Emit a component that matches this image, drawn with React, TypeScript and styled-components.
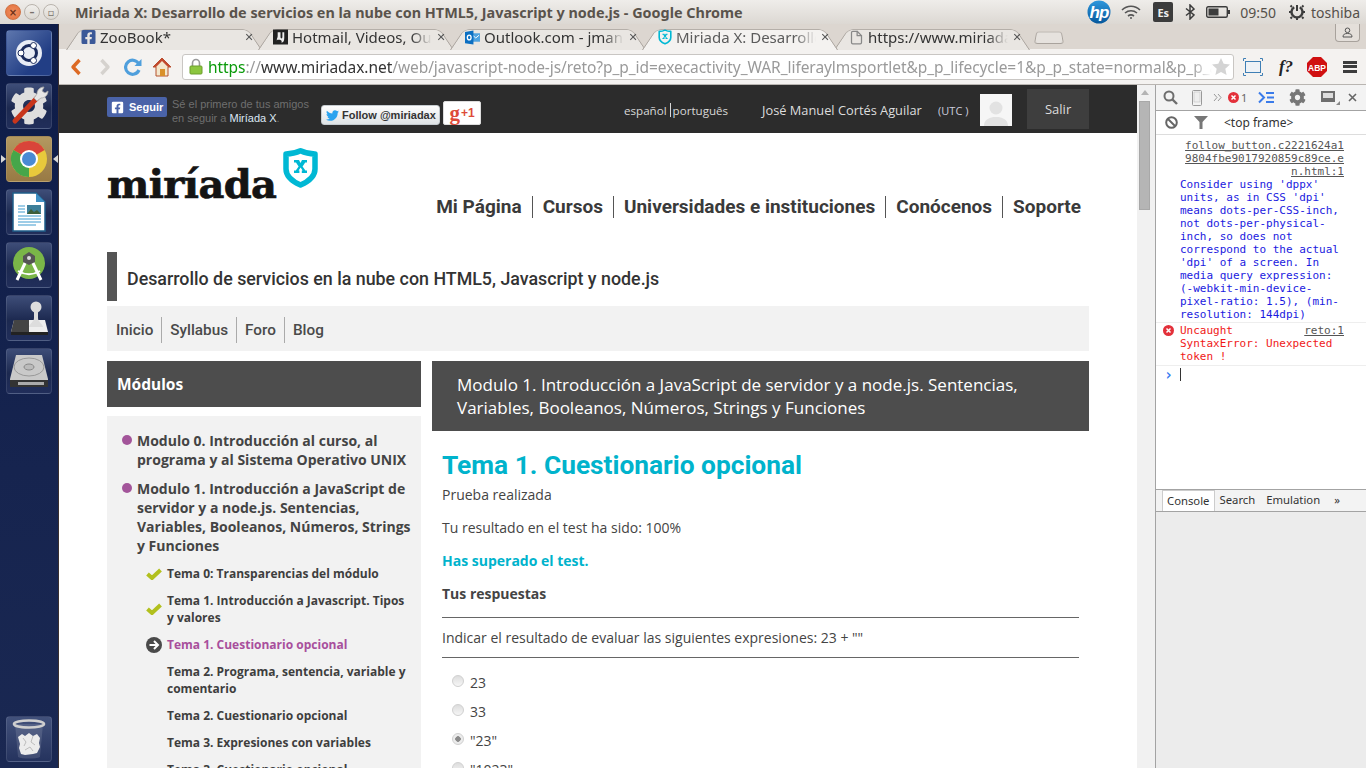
import React from "react";
import styled, { createGlobalStyle } from "styled-components";
import { FaFacebookSquare, FaTwitter, FaCog } from "react-icons/fa";
import { FiFile } from "react-icons/fi";

const Global = createGlobalStyle`
  html, body { margin: 0; padding: 0; width: 1366px; height: 768px; overflow: hidden; background: #fff; }
  * { box-sizing: border-box; }
`;

const Desktop = styled.div`
  width: 1366px; height: 768px; overflow: hidden; display: flex; flex-direction: column;
  font-family: "Open Sans", sans-serif; color: #444;
`;

/* ---------- top panel ---------- */
const TopBar = styled.header`
  height: 24px; flex: none; display: flex; align-items: center; padding: 0 6px 0 4px;
  background: linear-gradient(#efedea, #dcd8d3);
`;
const WinButtons = styled.div`display: flex; gap: 3px; width: 71px; flex: none; padding-left: 1px;`;
const WinButton = styled.span<{ $close?: boolean }>`
  width: 16px; height: 16px; border-radius: 50%; display: flex; align-items: center; justify-content: center;
  font: 700 10px "DejaVu Sans", sans-serif; color: ${p => (p.$close ? "#6e3218" : "#77706a")};
  border: 1px solid ${p => (p.$close ? "#d07344" : "#b9b3ac")};
  background: ${p => (p.$close ? "radial-gradient(#f0905f, #e36f3e)" : "linear-gradient(#f1efec, #dcd8d2)")};
`;
const WinTitle = styled.div`
  flex: 1; font: 700 14.4px "Noto Sans", sans-serif; color: #5a534c; white-space: nowrap;
`;
const Tray = styled.div`
  display: flex; align-items: center; flex: none; height: 24px; color: #4c4c4c;
  font: 400 14px "Noto Sans", sans-serif;
`;
const EsBadge = styled.span`
  width: 20px; height: 20px; background: #3c3c3c; color: #eee; border-radius: 2px; display: flex; align-items: center; justify-content: center;
  font: 700 11px "Noto Sans", sans-serif; margin: 0 12px 0 12px;
`;
const TrayText = styled.span<{ $l?: number; $r?: number }>`
  margin-left: ${p => p.$l ?? 0}px; margin-right: ${p => p.$r ?? 0}px;
  color: #55504a; white-space: nowrap;
`;
const TraySvg = styled.svg<{ $l?: number }>`margin-left: ${p => p.$l ?? 0}px; display: block; flex: none;`;

/* ---------- launcher ---------- */
const Body = styled.div`flex: 1; min-height: 0; display: flex;`;
const Launcher = styled.nav`
  width: 59px; flex: none; display: flex; flex-direction: column; gap: 7px; padding: 6px 0 6px 6px;
  background: linear-gradient(#0e1c48, #16244f 60%, #1a2852);
  border-right: 1px solid #3a3030;
  position: relative;
`;
const Tile = styled.div<{ $bg?: string }>`
  width: 46px; height: 46px; flex: none; border-radius: 4px; position: relative;
  background: ${p => p.$bg ?? "linear-gradient(#3e4d78, #1c2950 55%, #212e5a)"};
  border: 1px solid rgba(255,255,255,.1);
  display: flex; align-items: center; justify-content: center;
`;
const Pip = styled.span<{ $right?: boolean }>`
  position: absolute; top: 18px; width: 0; height: 0; border-top: 4px solid transparent; border-bottom: 4px solid transparent;
  ${p => p.$right ? "right: -7px; border-right: 5px solid #d8d8d8;" : "left: -6px; border-left: 5px solid #d8d8d8;"}
`;
const Spacer = styled.div`flex: 1;`;

/* ---------- browser chrome ---------- */
const Browser = styled.div`flex: 1; min-width: 0; display: flex; flex-direction: column;`;
const TabStrip = styled.div`
  height: 25px; flex: none; display: flex; align-items: flex-end; padding-left: 9px; position: relative;
  background: #dcd6d0;
`;
const Tab = styled.div<{ $active?: boolean }>`
  width: 192px; height: 24px; flex: none; position: relative; display: flex; align-items: center;
  padding: 0 4px 0 13px; font: 400 15px "Noto Sans", sans-serif; color: ${p => (p.$active ? "#5b5b5b" : "#333")};
  z-index: ${p => (p.$active ? 2 : 1)};
  &::before {
    content: ""; position: absolute; inset: 0 -2px -1px -2px; z-index: -1; transform-origin: bottom;
    transform: perspective(36px) rotateX(14deg);
    border: 1px solid #a8a29c; border-bottom: none; border-radius: 6px 6px 0 0;
    background: ${p => (p.$active ? "#f4f2f0" : "#e9e6e2")};
  }
`;
const TabFav = styled.span`width: 15px; flex: none; display: flex; align-items: center; justify-content: center;`;
const TabLabel = styled.span`
  flex: 1; min-width: 0; margin-left: 4px; white-space: nowrap; overflow: hidden;
  -webkit-mask-image: linear-gradient(90deg, #000 85%, transparent 100%);
  mask-image: linear-gradient(90deg, #000 85%, transparent 100%);
`;
const TabClose = styled.span`font: 700 11px "DejaVu Sans", sans-serif; color: #555; width: 14px; text-align: center; margin-left: 2px; flex: none;`;
const NewTab = styled.div`
  width: 30px; height: 15px; margin: 0 0 5px 6px; position: relative; flex: none;
  &::before {
    content: ""; position: absolute; inset: 0; transform-origin: bottom; transform: perspective(20px) rotateX(14deg);
    border: 1px solid #a8a29c; border-radius: 3px; background: #e6e2de;
  }
`;
const ProfileBtn = styled.div`
  position: absolute; right: 6px; top: 0; width: 25px; height: 18px; border: 1px solid #a8a29c; border-top: none;
  border-radius: 0 0 4px 4px; display: flex; align-items: center; justify-content: center; background: #e4dfda;
`;
const Toolbar = styled.div`
  height: 36px; flex: none; display: flex; align-items: center; background: #f4f2f0; border-bottom: 1px solid #b9b5b1;
  padding: 0 0 0 6px;
`;
const NavIcon = styled.span<{ $w: number }>`width: ${p => p.$w}px; flex: none; display: flex; justify-content: center; align-items: center;`;
const HomeIcon = styled.span`width: 40px; flex: none; display: flex; padding-left: 10px; align-items: center;`;
const Omnibox = styled.div`
  width: 1052px; height: 26px; flex: none; background: #fff; border: 1px solid #c9c6c3; border-radius: 3px;
  display: flex; align-items: center; padding: 0 3px 0 6px;
`;
const Url = styled.div`
  flex: 1; min-width: 0; overflow: hidden; white-space: nowrap; margin-left: 5px;
  font: 400 15.5px "Noto Sans", sans-serif; color: #9a9a9a; letter-spacing: -0.06px;
  -webkit-mask-image: linear-gradient(90deg, #000 98%, transparent 100%);
  mask-image: linear-gradient(90deg, #000 98%, transparent 100%);
`;
const UrlGreen = styled.span`color: #0a9a0a;`;
const UrlDark = styled.span`color: #333;`;
const FQ = styled.span`font: italic 700 17px "Liberation Serif", serif; color: #222;`;
const Burger = styled.span`
  width: 14px; height: 12px; border-top: 3px solid #3c3c3c; border-bottom: 3px solid #3c3c3c; position: relative; display: block;
  &::after { content: ""; position: absolute; left: 0; right: 0; top: 1.5px; height: 3px; background: #3c3c3c; }
`;

/* ---------- viewport ---------- */
const Viewport = styled.div`flex: 1; min-height: 0; display: flex;`;
const Page = styled.main`width: 1078px; flex: none; background: #fff; overflow: hidden;`;
const DarkBar = styled.div`
  height: 48px; background: #2c2c2c; padding: 0 48px; display: flex; align-items: flex-start;
`;
const FbBtn = styled.a`
  width: 60px; height: 20px; margin-top: 12px; flex: none; background: #4a63a8; border-radius: 2px; color: #fff;
  display: flex; align-items: center; gap: 5px; padding-left: 4px; font: 700 11px "Liberation Sans", sans-serif;
`;
const FbNote = styled.div`
  width: 149px; margin: 12px 0 0 5px; flex: none; font: 400 11px/14px "Liberation Sans", sans-serif; color: #6f6f6f;
`;
const FbName = styled.span`color: #dce8f5;`;
const TwBtn = styled.a`
  width: 119px; height: 20px; margin-top: 20px; flex: none; background: linear-gradient(#fdfdfd, #dfe3e6); border: 1px solid #c6ccd0; border-radius: 3px;
  display: flex; align-items: center; gap: 3px; padding-left: 4px; font: 700 11px "Liberation Sans", sans-serif; color: #333; white-space: nowrap;
`;
const GBtn = styled.a`
  width: 38px; height: 24px; margin: 16px 0 0 3px; flex: none; background: #fff; border: 1px solid #ddd; border-radius: 2px; color: #dd4b39;
  display: flex; align-items: center; justify-content: center; gap: 1px; font: 700 21px/20px "Liberation Serif", serif; white-space: nowrap;
`;
const GPlus = styled.span`font: 700 12px "Liberation Sans", sans-serif;`;
const Langs = styled.div`
  margin: 18px 0 0 143px; flex: none; display: flex; align-items: center; font: 400 11.6px "Open Sans", sans-serif; color: #d8d8d8; height: 14px;
`;
const LangSep = styled.span`width: 1px; height: 14px; background: #d8d8d8; margin: 0 2px 0 3px;`;
const UserName = styled.div`margin: 15px 0 0 34px; flex: none; font: 400 12.8px/20px "Open Sans", sans-serif; color: #ddd; white-space: nowrap; width: 160px;`;
const Utc = styled.div`margin: 18px 0 0 16px; flex: none; font: 400 11px/16px "Open Sans", sans-serif; color: #ccd; white-space: nowrap; width: 32px;`;
const Avatar = styled.div`width: 32px; height: 32px; margin: 9px 0 0 10px; flex: none; background: #f6f6f6; display: flex; align-items: flex-end; justify-content: center; overflow: hidden;`;
const Salir = styled.a`
  width: 62px; height: 40px; margin: 4px 0 0 15px; flex: none; background: #3e3e3e; color: #ddd; display: flex; align-items: center; justify-content: center;
  font: 400 13px "Open Sans", sans-serif;
`;
const Content = styled.div`padding: 0 48px;`;
const SiteHeader = styled.div`height: 119px; display: flex; justify-content: space-between; align-items: flex-start;`;
const Logo = styled.div`display: flex; align-items: flex-start; gap: 7px; padding-top: 15px; flex: none;`;
const LogoWord = styled.div`
  font: 700 40px/1 "DejaVu Serif", serif; color: #141414; letter-spacing: -0.6px; padding-top: 16px;
  -webkit-text-stroke: 0.7px #141414;
`;
const MainNav = styled.nav`display: flex; align-items: center; margin: 63px 8px 0 0; height: 22px;`;
const NavItem = styled.a<{ $sep?: boolean }>`
  font: 700 19px "Roboto", sans-serif; color: #3a3a3a; white-space: nowrap; padding: 0 10px; line-height: 22px;
  ${p => p.$sep ? "border-left: 1px solid #555;" : ""}
  &:last-child { padding-right: 0; }
`;
const CourseTitle = styled.div`
  height: 49px; display: flex; align-items: center; border-left: 10px solid #555; padding: 3px 0 0 10px;
  font: 500 17.83px "Roboto", sans-serif; color: #333; white-space: nowrap;
`;
const CourseTabs = styled.div`
  height: 45px; margin-top: 5px; background: #f2f2f2; display: flex; align-items: center; padding: 3px 0 0 1px;
`;
const CourseTab = styled.a<{ $sep?: boolean }>`
  font: 500 15.3px/26px "Roboto", sans-serif; color: #4a4a4a; padding: 0 8px;
  ${p => p.$sep ? "border-left: 1px solid #aaa;" : ""}
`;
const Columns = styled.div`display: flex; gap: 11px; margin-top: 10px;`;
const Side = styled.aside`width: 314px; flex: none;`;
const SideHead = styled.div`
  height: 46px; background: #4d4d4d; color: #fff; display: flex; align-items: center; padding-left: 10px;
  font: 700 15.5px "Noto Sans", sans-serif;
`;
const SidePanel = styled.div`margin-top: 9px; background: #f2f2f2; padding: 15px 10px 10px 15px;`;
const Mod = styled.div`
  position: relative; padding-left: 15px; font: 700 14px/19px "Open Sans", sans-serif; color: #444; margin-bottom: 10px;
  &::before { content: ""; position: absolute; left: 0; top: 4px; width: 10px; height: 10px; border-radius: 50%; background: #a3559a; }
`;
const Sub = styled.div<{ $current?: boolean }>`
  position: relative; margin: 0 0 10px 45px; font: 700 12px/17px "Open Sans", sans-serif;
  color: ${p => (p.$current ? "#a84f9c" : "#3e3e3e")};
`;
const SubIcon = styled.span`position: absolute; left: -21px; top: 50%; transform: translateY(-50%); display: flex;`;
const Main = styled.section`width: 657px; flex: none;`;
const MainHead = styled.div`
  height: 70px; background: #4d4d4d; color: #fff; padding: 12px 25px 0; font: 400 17px/23px "Open Sans", sans-serif;
`;
const MainBody = styled.div`padding: 18px 10px 0;`;
const H1 = styled.h1`margin: 0 0 4px; font: 700 26.3px/32px "Roboto", sans-serif; color: #00b3cc;`;
const P = styled.p<{ $accent?: boolean; $bold?: boolean }>`
  margin: 0 0 ${p => (p.$bold ? 15 : 14)}px; font: ${p => (p.$bold || p.$accent ? 700 : 400)} 14px/19px "Open Sans", sans-serif;
  color: ${p => (p.$accent ? "#00b3cc" : "#444")};
`;
const Question = styled.div`
  margin-top: -1px; border-top: 1px solid #666; border-bottom: 1px solid #666; height: 41px; display: flex; align-items: center;
  font: 400 14px "Open Sans", sans-serif; color: #444;
`;
const Options = styled.div`padding: 10px 0 0 10px; display: flex; flex-direction: column;`;
const Option = styled.label`height: 29px; display: flex; align-items: center; gap: 6px; font: 400 14px "Open Sans", sans-serif; color: #444;`;
const Radio = styled.span<{ $on?: boolean }>`
  width: 12px; height: 12px; border-radius: 50%; flex: none; border: 1px solid #d0d0d0; margin-top: -3px;
  background: ${p => (p.$on ? "radial-gradient(circle, #8a8a8a 0 2.5px, #ececec 3px)" : "linear-gradient(#ddd, #f6f6f6)")};
`;

/* scrollbar */
const Scroll = styled.div`
  width: 18px; flex: none; background: #f1f1f1; padding: 5px 5px 0 2px; display: flex; flex-direction: column; align-items: stretch;
`;
const ScrollUp = styled.span`width: 0; height: 0; align-self: center; border-left: 4px solid transparent; border-right: 4px solid transparent; border-bottom: 5px solid #b4b4b4;`;
const Thumb = styled.div`height: 109px; margin-top: 6px; background: #b5b5b5; border: 1px solid #a8a8a8;`;

/* devtools */
const Dev = styled.aside`
  width: 211px; flex: none; border-left: 1px solid #a3a3a3; background: #fff; display: flex; flex-direction: column;
`;
const DevBar = styled.div`
  height: 26px; flex: none; background: #f3f3f3; border-bottom: 1px solid #a3a3a3; display: flex; align-items: center; padding-left: 7px;
`;
const DevIcon = styled.span<{ $l?: number }>`margin-left: ${p => p.$l ?? 0}px; display: flex; align-items: center; flex: none;`;
const ErrCount = styled.span`font: 400 11px "Noto Sans", sans-serif; color: #666; margin-left: 2px;`;
const DevBar2 = styled.div`
  height: 24px; flex: none; border-bottom: 1px solid #ddd; display: flex; align-items: center; padding-left: 9px; background: #fff;
`;
const FrameName = styled.span`margin-left: 16px; font: 400 12px "Noto Sans", sans-serif; color: #333;`;
const ConsoleArea = styled.div`height: 355px; flex: none; overflow: hidden; font: 400 11px/13px "DejaVu Sans Mono", monospace;`;
const Source = styled.div`padding: 4px 22px 0 24px; text-align: right; color: #555; text-decoration: underline; word-break: break-all;`;
const LogMsg = styled.div`padding: 0 22px 1px 24px; color: #1a1ae0; border-bottom: 1px solid #eee;`;
const ErrMsg = styled.div`
  position: relative; padding: 1px 22px 2px 24px; color: #f01818; border-bottom: 1px solid #eee;
`;
const ErrFile = styled.span`float: right; color: #555; text-decoration: underline;`;
const ErrDot = styled.span`position: absolute; left: 7px; top: 2px; display: flex;`;
const Prompt = styled.div`position: relative; padding: 2px 0 0 24px; height: 18px;`;
const PromptMark = styled.span`position: absolute; left: 8px; top: 0; color: #367cf1; font: 700 15px "DejaVu Sans Mono", monospace;`;
const Caret = styled.span`display: block; width: 1px; height: 13px; background: #333;`;
const DrawerTabs = styled.div`
  height: 23px; flex: none; border-top: 1px solid #a3a3a3; border-bottom: 1px solid #a3a3a3; background: #f3f3f3; display: flex; align-items: stretch; padding-left: 6px;
  font: 400 11.3px "Noto Sans", sans-serif; color: #333; margin-top: -1px;
`;
const DrawerTab = styled.span<{ $on?: boolean; $r?: number }>`
  display: flex; align-items: center; padding: 0 5px 2px; margin-right: ${p => p.$r ?? 0}px;
  ${p => p.$on ? "background: #fff; border: 1px solid #ccc; border-bottom: none; padding: 0 4px 2px;" : ""}
`;
const DrawerFill = styled.div`flex: 1; background: #ececec;`;

const Shield = ({ size = 16, w = 5.5 }: { size?: number; w?: number }) => (
  <svg width={size * 0.875} height={size} viewBox="0 0 35 40">
    <path d="M17.5 2.8C22 5 27 6 32 6V21C32 28 25.5 33.5 17.5 37C9.5 33.5 3 28 3 21V6C8 6 13 5 17.5 2.8Z" fill="none" stroke="#00b8d4" strokeWidth={w} strokeLinejoin="round" />
    <path d="M11 12h5l1.5 3 1.5-3h5v2.4h-1.8l-2.6 4 2.8 4.2H24V25h-5.2v-2.4h.8l-2-3-2 3h.8V25H11v-2.4h1.8l2.8-4.2-2.6-4H11z" fill="#00b8d4" />
  </svg>
);

const tabsData = [
  { label: "ZooBook*", icon: <FaFacebookSquare size={16} color="#3b5998" /> },
  {
    label: "Hotmail, Videos, Outlook",
    icon: (
      <svg width="16" height="16" viewBox="0 0 16 16"><rect width="16" height="16" fill="#222" /><path d="M5 3h3v5c0 2 2 2 2 0V3h2v6c0 3-1 5-3 5 1-2-1-3-2-3-2 0-3 0-3 1 0-3 1-3 1-5z" fill="#eee" /></svg>
    ),
  },
  {
    label: "Outlook.com - jmanuel",
    icon: (
      <svg width="16" height="15" viewBox="0 0 16 15"><rect x="7" y="3" width="9" height="9" fill="#4fa3e0" /><path d="M8 5l3.5 3L15 5" fill="none" stroke="#fff" /><path d="M0 1.5 9 0v15L0 13.5z" fill="#0b6fc2" /><ellipse cx="4.5" cy="7.5" rx="2" ry="2.6" fill="none" stroke="#fff" strokeWidth="1.4" /></svg>
    ),
  },
  { label: "Miriada X: Desarrollo de", icon: <Shield size={16} w={4} />, active: true },
  { label: "https://www.miriadax.net", icon: <FiFile size={15} color="#888" /> },
];

export default function App() {
  return (
    <Desktop>
      <Global />
      <TopBar>
        <WinButtons>
          <WinButton $close>×</WinButton>
          <WinButton>–</WinButton>
          <WinButton>▫</WinButton>
        </WinButtons>
        <WinTitle>Miriada X: Desarrollo de servicios en la nube con HTML5, Javascript y node.js - Google Chrome</WinTitle>
        <Tray>
          <TraySvg width="24" height="24" viewBox="0 0 24 24">
            <defs><linearGradient id="hpg" x1="0" y1="0" x2="0" y2="1"><stop offset="0" stopColor="#2f97dc" /><stop offset="1" stopColor="#06589c" /></linearGradient></defs>
            <circle cx="12" cy="12" r="11.5" fill="url(#hpg)" />
            <text x="12" y="17.5" textAnchor="middle" fontFamily="Liberation Sans" fontStyle="italic" fontWeight="700" fontSize="17" fill="#fff" letterSpacing="-1">hp</text>
          </TraySvg>
          <TraySvg $l={10} width="20" height="14" viewBox="0 0 20 14"><path d="M1 5c5-5 13-5 18 0M4 8c3.5-3 8.5-3 12 0M7 11c2-1.5 4-1.5 6 0" fill="none" stroke="#555" strokeWidth="1.6" /><circle cx="10" cy="13" r="1" fill="#555" /></TraySvg>
          <EsBadge>Es</EsBadge>
          <TraySvg width="10" height="16" viewBox="0 0 10 16"><path d="M1 4.5 9 11l-4 4V1l4 4-8 6.5" fill="none" stroke="#3c3c3c" strokeWidth="1.5" /></TraySvg>
          <TraySvg $l={11} width="24" height="12" viewBox="0 0 24 12"><rect x=".7" y=".7" width="20.6" height="10.6" rx="1.5" fill="none" stroke="#3c3c3c" strokeWidth="1.4" /><rect x="2.5" y="2.5" width="10" height="7" fill="#3c3c3c" /><rect x="22" y="4" width="2" height="4" fill="#3c3c3c" /></TraySvg>
          <TrayText $l={10}>09:50</TrayText>
          <TraySvg $l={13} width="16" height="16" viewBox="0 0 16 16"><path d="M5.2 3.2A5.5 5.5 0 1 0 10.8 3.2" fill="none" stroke="#3c3c3c" strokeWidth="2.4" /><path d="M8 1v6" stroke="#3c3c3c" strokeWidth="2" /><path d="M8 14v2M2 8H0M16 8h-2M3 3 1.5 1.5M13 3l1.5-1.500M3 13l-1.500 1.500M13 13l1.500 1.500" stroke="#3c3c3c" strokeWidth="2" /></TraySvg>
          <TrayText $l={6}>toshiba</TrayText>
        </Tray>
      </TopBar>
      <Body>
        <Launcher>
          <Tile $bg="linear-gradient(135deg, #5d76ad, #223e85 70%)">
            <svg width="28" height="28" viewBox="0 0 28 28"><circle cx="14" cy="14" r="13" fill="#e8ecf5" /><circle cx="14" cy="14" r="7.5" fill="none" stroke="#1a2a5c" strokeWidth="3" /><circle cx="6" cy="14" r="3" fill="#fff" stroke="#1a2a5c" /><circle cx="18.5" cy="6.5" r="3" fill="#fff" stroke="#1a2a5c" /><circle cx="18.5" cy="21.5" r="3" fill="#fff" stroke="#1a2a5c" /></svg>
          </Tile>
          <Tile>
            <svg width="42" height="42" viewBox="0 0 42 42">
              <FaCog x="2" y="2" size={38} color="#dedede" />
              <path d="M7 36 29 13" stroke="#c8361c" strokeWidth="5" strokeLinecap="round" />
              <path d="M36 2c-4 0-7 3-7 7l-3 4 3 3 4-3c4 0 7-3 7-7l-3 2-3-2z" fill="#e6e6e6" stroke="#aaa" strokeWidth=".8" />
            </svg>
          </Tile>
          <Tile $bg="linear-gradient(#b39860, #987a44)">
            <Pip />
            <Pip $right />
            <svg width="40" height="40" viewBox="0 0 40 40"><circle cx="20" cy="20" r="18" fill="#e8c93c" /><path d="M20 20 4.4 11A18 18 0 0 1 35.6 11z" fill="#d9453a" /><path d="M20 20 4.4 11A18 18 0 0 0 20 38z" fill="#46a64a" /><circle cx="20" cy="20" r="9" fill="#fff" /><circle cx="20" cy="20" r="7" fill="#4a8ad4" /></svg>
          </Tile>
          <Tile>
            <svg width="34" height="40" viewBox="0 0 34 40"><path d="M1 1h23l9 9v29H1z" fill="#fff" stroke="#1f5f8a" strokeWidth="1.5" /><path d="M24 1l9 9h-9z" fill="#3f8fc4" /><rect x="15" y="13" width="14" height="9" fill="#3d7f9a" /><path d="M15 22l4-5 3 3 3-2 4 4z" fill="#3d5f3a" /><path d="M6 14h7M6 17h7M6 20h7M6 24h23M6 27h23M6 30h23M6 33h18" stroke="#7fbde0" strokeWidth="1.6" /></svg>
          </Tile>
          <Tile>
            <svg width="40" height="40" viewBox="0 0 40 40"><circle cx="20" cy="18" r="16" fill="#7ab648" /><path d="M8 35 18 14M32 35 22 14" stroke="#fff" strokeWidth="3" /><path d="M9 26c7 4 15 4 22 0" fill="none" stroke="#fff" strokeWidth="2" /><path d="M20 7l6 4v6l-6 3-6-3v-6z" fill="#555" /><circle cx="20" cy="13" r="2" fill="#ddd" /></svg>
          </Tile>
          <Tile>
            <svg width="42" height="40" viewBox="0 0 42 40"><path d="M6 22h31l3 12H3z" fill="#eee" /><path d="M6 22h15v12H3z" fill="#444" /><path d="M3 34h37v3H3z" fill="#222" /><circle cx="28" cy="9" r="5.5" fill="#ddd" /><path d="M26 14h4v6c0 4 5 6 5 9H21c0-3 5-5 5-9z" fill="#ddd" /></svg>
          </Tile>
          <Tile>
            <svg width="42" height="36" viewBox="0 0 42 36"><path d="M8 2h26l6 24v8H2v-8z" fill="#c9c9c9" /><ellipse cx="21" cy="14" rx="15" ry="9" fill="none" stroke="#999" /><ellipse cx="21" cy="14" rx="5" ry="3" fill="#bbb" stroke="#888" /><rect x="2" y="27" width="38" height="7" fill="#333" /><rect x="10" y="29" width="26" height="3" fill="#aaa" /></svg>
          </Tile>
          <Spacer />
          <Tile $bg="linear-gradient(#42517b, #25335e)">
            <svg width="36" height="42" viewBox="0 0 36 42">
              <path d="M4 6h28l-3 33c-4 2-18 2-22 0z" fill="rgba(255,255,255,.12)" />
              <ellipse cx="18" cy="6" rx="15" ry="3.5" fill="none" stroke="#cfcfcf" strokeWidth="2.6" />
              <path d="M7 19l4-3 3 2 4-3 4 3 4-2 3 4-1 5 1 4-3 6-4 1-8 1-4-1-2-6 1-4z" fill="#ececec" />
              <path d="M12 20l3 4-2 4M22 18l-2 6 4 3M14 32l5-3 3 4" fill="none" stroke="#bdbdbd" />
            </svg>
          </Tile>
        </Launcher>
        <Browser>
          <TabStrip>
            {tabsData.map(t => (
              <Tab key={t.label} $active={t.active}>
                <TabFav>{t.icon}</TabFav>
                <TabLabel>{t.label}</TabLabel>
                <TabClose>✕</TabClose>
              </Tab>
            ))}
            <NewTab />
            <ProfileBtn>
              <svg width="11" height="11" viewBox="0 0 11 11"><circle cx="5.5" cy="3.3" r="2.3" fill="none" stroke="#555" /><path d="M1 10c0-3 2-3.5 4.5-3.5S10 7 10 10z" fill="none" stroke="#555" /></svg>
            </ProfileBtn>
          </TabStrip>
          <Toolbar>
            <NavIcon $w={21}>
              <svg width="12" height="18" viewBox="0 0 12 18"><path d="M9.5 2 3 9l6.5 7" fill="none" stroke="#dd6a24" strokeWidth="3.4" strokeLinejoin="round" /></svg>
            </NavIcon>
            <NavIcon $w={38}>
              <svg width="12" height="18" viewBox="0 0 12 18"><path d="M2.5 2 9 9l-6.5 7" fill="none" stroke="#d5d2ce" strokeWidth="3.4" strokeLinejoin="round" /></svg>
            </NavIcon>
            <NavIcon $w={18}>
              <svg width="18" height="18" viewBox="0 0 18 18"><path d="M15 6.5A7 7 0 1 0 15 12" fill="none" stroke="#4f9fdc" strokeWidth="3.2" /><path d="M17.5 1v7h-7z" fill="#4f9fdc" /></svg>
            </NavIcon>
            <HomeIcon>
              <svg width="20" height="20" viewBox="0 0 20 20"><path d="M10 1 1 10h3v9h12v-9h3z" fill="#f3e7cd" stroke="#b5532e" strokeWidth="1" /><path d="M10 1 1 10h3l6-6 6 6h3z" fill="#c2492e" /><rect x="8" y="12" width="5" height="7" fill="#d9902a" /></svg>
            </HomeIcon>
            <Omnibox>
              <svg width="14" height="17" viewBox="0 0 14 17"><path d="M3.5 8V5a3.5 3.5 0 0 1 7 0v3" fill="none" stroke="#9a9a9a" strokeWidth="1.6" /><rect x="1" y="8" width="12" height="8" rx="1" fill="#8cc63f" stroke="#6c9e2c" /></svg>
              <Url><UrlGreen>https</UrlGreen>://<UrlDark>www.miriadax.net</UrlDark>/web/javascript-node-js/reto?p_p_id=execactivity_WAR_liferaylmsportlet&amp;p_p_lifecycle=1&amp;p_p_state=normal&amp;p_p_auth=0</Url>
              <svg width="18" height="17" viewBox="0 0 18 17"><path d="M9 0l2.7 5.8 6.3.7-4.7 4.2 1.3 6.3L9 14l-5.6 3 1.3-6.3L0 6.5l6.3-.7z" fill="#d4d4d4" /></svg>
            </Omnibox>
            <NavIcon $w={38}>
              <svg width="20" height="18" viewBox="0 0 20 18"><rect x="2.5" y="3.5" width="15" height="11" fill="#eef2f6" stroke="#3f7fb5" /><path d="M.5 3V.5H3M17 .5h2.5V3M.5 15v2.500H3M17 17.500h2.500V15" fill="none" stroke="#3f7fb5" /></svg>
            </NavIcon>
            <NavIcon $w={28}><FQ>f?</FQ></NavIcon>
            <NavIcon $w={34}>
              <svg width="20" height="20" viewBox="0 0 20 20"><path d="M6 0h8l6 6v8l-6 6H6l-6-6V6z" fill="#d01010" /><text x="10" y="13.5" textAnchor="middle" fontFamily="Liberation Sans" fontWeight="700" fontSize="8.5" fill="#fff">ABP</text></svg>
            </NavIcon>
            <NavIcon $w={32}><Burger /></NavIcon>
          </Toolbar>
          <Viewport>
            <Page>
              <DarkBar>
                <FbBtn><FaFacebookSquare size={13} color="#fff" />Seguir</FbBtn>
                <FbNote>Sé el primero de tus amigos en seguir a <FbName>Miríada X</FbName>.</FbNote>
                <TwBtn><FaTwitter size={13} color="#2aa3ef" />Follow @miriadax</TwBtn>
                <GBtn>g<GPlus>+1</GPlus></GBtn>
                <Langs>español<LangSep />português</Langs>
                <UserName>José Manuel Cortés Aguilar</UserName>
                <Utc>(UTC )</Utc>
                <Avatar>
                  <svg width="28" height="28" viewBox="0 0 28 28"><circle cx="14" cy="10" r="6.5" fill="#e2e2e2" /><path d="M2 28c0-7 6-8 9-9h6c3 1 9 2 9 9z" fill="#e2e2e2" /></svg>
                </Avatar>
                <Salir>Salir</Salir>
              </DarkBar>
              <Content>
                <SiteHeader>
                  <Logo>
                    <LogoWord>miríada</LogoWord>
                    <Shield size={40} />
                  </Logo>
                  <MainNav>
                    <NavItem>Mi Página</NavItem>
                    <NavItem $sep>Cursos</NavItem>
                    <NavItem $sep>Universidades e instituciones</NavItem>
                    <NavItem $sep>Conócenos</NavItem>
                    <NavItem $sep>Soporte</NavItem>
                  </MainNav>
                </SiteHeader>
                <CourseTitle>Desarrollo de servicios en la nube con HTML5, Javascript y node.js</CourseTitle>
                <CourseTabs>
                  <CourseTab>Inicio</CourseTab>
                  <CourseTab $sep>Syllabus</CourseTab>
                  <CourseTab $sep>Foro</CourseTab>
                  <CourseTab $sep>Blog</CourseTab>
                </CourseTabs>
                <Columns>
                  <Side>
                    <SideHead>Módulos</SideHead>
                    <SidePanel>
                      <Mod>Modulo 0. Introducción al curso, al programa y al Sistema Operativo UNIX</Mod>
                      <Mod>Modulo 1. Introducción a JavaScript de servidor y a node.js. Sentencias, Variables, Booleanos, Números, Strings y Funciones</Mod>
                      <Sub>
                        <SubIcon><Check /></SubIcon>
                        Tema 0: Transparencias del módulo
                      </Sub>
                      <Sub>
                        <SubIcon><Check /></SubIcon>
                        Tema 1. Introducción a Javascript. Tipos y valores
                      </Sub>
                      <Sub $current>
                        <SubIcon>
                          <svg width="16" height="16" viewBox="0 0 16 16"><circle cx="8" cy="8" r="8" fill="#4a4a4a" /><path d="M3.5 8h8M8 4l4 4-4 4" fill="none" stroke="#fff" strokeWidth="2" /></svg>
                        </SubIcon>
                        Tema 1. Cuestionario opcional
                      </Sub>
                      <Sub>Tema 2. Programa, sentencia, variable y comentario</Sub>
                      <Sub>Tema 2. Cuestionario opcional</Sub>
                      <Sub>Tema 3. Expresiones con variables</Sub>
                      <Sub>Tema 3. Cuestionario opcional</Sub>
                    </SidePanel>
                  </Side>
                  <Main>
                    <MainHead>Modulo 1. Introducción a JavaScript de servidor y a node.js. Sentencias, Variables, Booleanos, Números, Strings y Funciones</MainHead>
                    <MainBody>
                      <H1>Tema 1. Cuestionario opcional</H1>
                      <P>Prueba realizada</P>
                      <P>Tu resultado en el test ha sido: 100%</P>
                      <P $accent>Has superado el test.</P>
                      <P $bold>Tus respuestas</P>
                      <Question>Indicar el resultado de evaluar las siguientes expresiones: 23 + ""</Question>
                      <Options>
                        <Option><Radio />23</Option>
                        <Option><Radio />33</Option>
                        <Option><Radio $on />"23"</Option>
                        <Option><Radio />"1023"</Option>
                      </Options>
                    </MainBody>
                  </Main>
                </Columns>
              </Content>
            </Page>
            <Scroll>
              <ScrollUp />
              <Thumb />
            </Scroll>
            <Dev>
              <DevBar>
                <DevIcon>
                  <svg width="15" height="15" viewBox="0 0 15 15"><circle cx="6" cy="6" r="4.5" fill="none" stroke="#6e6e6e" strokeWidth="2" /><path d="M9.5 9.5 14 14" stroke="#6e6e6e" strokeWidth="2.4" /></svg>
                </DevIcon>
                <DevIcon $l={14}>
                  <svg width="10" height="16" viewBox="0 0 10 16"><rect x=".5" y=".5" width="9" height="15" rx="1" fill="none" stroke="#999" /><path d="M2 2h6v10H2z" fill="#eee" stroke="#bbb" strokeWidth=".5" /></svg>
                </DevIcon>
                <DevIcon $l={11}>
                  <svg width="9" height="9" viewBox="0 0 9 9"><path d="M1 1l3 3.5-3 3.5M5 1l3 3.5-3 3.5" fill="none" stroke="#999" /></svg>
                </DevIcon>
                <DevIcon $l={6}>
                  <svg width="11" height="11" viewBox="0 0 11 11"><circle cx="5.5" cy="5.5" r="5.5" fill="#e3303a" /><path d="M3.5 3.5l4 4M7.5 3.5l-4 4" stroke="#fff" strokeWidth="1.5" /></svg>
                </DevIcon>
                <ErrCount>1</ErrCount>
                <DevIcon $l={11}>
                  <svg width="16" height="13" viewBox="0 0 16 13"><path d="M1 1.5 6 6.5l-5 5" fill="none" stroke="#3a7bea" strokeWidth="2" /><path d="M8 2h8M9 6.5h7M8 11h8" stroke="#3a7bea" strokeWidth="2" /></svg>
                </DevIcon>
                <DevIcon $l={15}><FaCog size={17} color="#777" /></DevIcon>
                <DevIcon $l={15}>
                  <svg width="19" height="16" viewBox="0 0 19 16"><rect x="0" y="1" width="14" height="11" fill="#6e6e6e" /><rect x="2" y="3" width="10" height="5" fill="#ddd" /><path d="M15 15h4v-4z" fill="#888" /></svg>
                </DevIcon>
                <DevIcon $l={8}>
                  <svg width="9" height="9" viewBox="0 0 9 9"><path d="M1 1l7 7M8 1 1 8" stroke="#666" strokeWidth="1.6" /></svg>
                </DevIcon>
              </DevBar>
              <DevBar2>
                <DevIcon>
                  <svg width="13" height="13" viewBox="0 0 13 13"><circle cx="6.5" cy="6.5" r="5.3" fill="none" stroke="#666" strokeWidth="2" /><path d="M3 3l7 7" stroke="#666" strokeWidth="2" /></svg>
                </DevIcon>
                <DevIcon $l={16}>
                  <svg width="14" height="13" viewBox="0 0 14 13"><path d="M0 0h14L8.5 6v7h-3V6z" fill="#777" /></svg>
                </DevIcon>
                <FrameName>&lt;top frame&gt;</FrameName>
              </DevBar2>
              <ConsoleArea>
                <Source>follow_button.c2221624a19804fbe9017920859c89ce.en.html:1</Source>
                <LogMsg>Consider using 'dppx' units, as in CSS 'dpi' means dots-per-CSS-inch, not dots-per-physical-inch, so does not correspond to the actual 'dpi' of a screen. In media query expression: (-webkit-min-device-pixel-ratio: 1.5), (min-resolution: 144dpi)</LogMsg>
                <ErrMsg>
                  <ErrDot>
                    <svg width="11" height="11" viewBox="0 0 11 11"><circle cx="5.5" cy="5.5" r="5.5" fill="#e3303a" /><path d="M3.5 3.5l4 4M7.5 3.5l-4 4" stroke="#fff" strokeWidth="1.5" /></svg>
                  </ErrDot>
                  <ErrFile>reto:1</ErrFile>
                  Uncaught SyntaxError: Unexpected token !
                </ErrMsg>
                <Prompt>
                  <PromptMark>›</PromptMark>
                  <Caret />
                </Prompt>
              </ConsoleArea>
              <DrawerTabs>
                <DrawerTab $on>Console</DrawerTab>
                <DrawerTab $r={1}>Search</DrawerTab>
                <DrawerTab $r={4}>Emulation</DrawerTab>
                <DrawerTab>»</DrawerTab>
              </DrawerTabs>
              <DrawerFill />
            </Dev>
          </Viewport>
        </Browser>
      </Body>
    </Desktop>
  );
}

function Check() {
  return (
    <svg width="16" height="12" viewBox="0 0 16 12"><path d="M1.5 6 6 10l8.5-8" fill="none" stroke="#b2c01e" strokeWidth="4" /></svg>
  );
}
